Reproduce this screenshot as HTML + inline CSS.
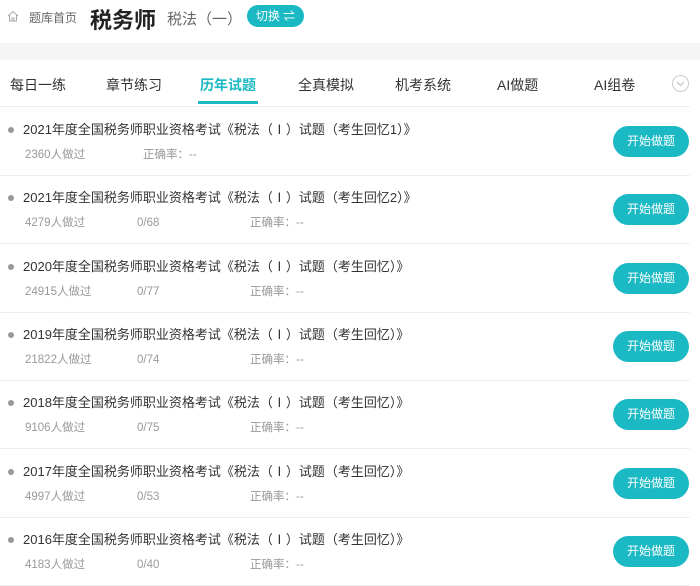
<!DOCTYPE html><html><head><meta charset="utf-8"><style>
*{margin:0;padding:0;box-sizing:border-box}
body{width:700px;height:578px;overflow:hidden;background:#fff;font-family:"Liberation Sans","Noto Sans CJK SC",sans-serif;position:relative}
.a{position:absolute;white-space:nowrap}
.tab{position:absolute;top:75px;font-size:14px;color:#333}
.row{position:absolute;left:0;width:690px;height:68px;border-bottom:1px solid #eee}
.dot{position:absolute;left:8px;top:19px;width:6px;height:6px;border-radius:50%;background:#999}
.t{position:absolute;left:23px;top:13px;font-size:13px;line-height:18px;color:#333;white-space:nowrap}
.s{position:absolute;top:39px;font-size:11.5px;line-height:16px;color:#999;white-space:nowrap}
.btn{position:absolute;left:613px;top:18px;width:76px;height:31px;border-radius:16px;background:#1bb9c3;color:#fff;font-size:12px;text-align:center;line-height:31px}
</style></head><body>
<svg class="a" style="left:7px;top:10px" width="12" height="12" viewBox="0 0 12 12"><path d="M1 6L6 1.5 11 6M2.5 5v6h7V5M5 11V8h2v3" fill="none" stroke="#aaa" stroke-width="1"/></svg>
<div class="a" style="left:29px;top:9px;font-size:12px;color:#666">题库首页</div>
<div class="a" style="left:90px;top:3px;font-size:22px;font-weight:bold;color:#222">税务师</div>
<div class="a" style="left:167px;top:8px;font-size:15px;color:#666">税法（一）</div>
<div class="a" style="left:247px;top:5px;width:57px;height:22px;border-radius:11px;background:#1bb9c3;color:#fff;font-size:12px;line-height:22px;text-align:center">切换 ⇌</div>
<div class="a" style="left:0;top:43px;width:700px;height:17px;background:#f5f5f5"></div>
<div class="tab" style="left:10px">每日一练</div>
<div class="tab" style="left:106px">章节练习</div>
<div class="tab" style="left:200px;color:#1bb9c3;font-weight:bold">历年试题</div>
<div class="a" style="left:198px;top:101px;width:60px;height:3px;background:#1bb9c3"></div>
<div class="tab" style="left:298px">全真模拟</div>
<div class="tab" style="left:395px">机考系统</div>
<div class="tab" style="left:497px">AI做题</div>
<div class="tab" style="left:594px">AI组卷</div>
<div class="a" style="left:672px;top:75px;width:17px;height:17px;border:1px solid #ccc;border-radius:50%"></div>
<svg class="a" style="left:676px;top:81px" width="9" height="6"><path d="M1 1l3.5 3.5L8 1" fill="none" stroke="#bbb"/></svg>
<div class="a" style="left:0;top:106px;width:690px;height:1px;background:#eee"></div>

<div class="row" style="top:108px"><div class="dot"></div><div class="t">2021年度全国税务师职业资格考试《税法（Ⅰ）试题（考生回忆1）》</div><div class="s" style="left:25px">2360人做过</div><div class="s" style="left:143px">正确率：--</div><div class="btn">开始做题</div></div>
<div class="row" style="top:176px"><div class="dot"></div><div class="t">2021年度全国税务师职业资格考试《税法（Ⅰ）试题（考生回忆2）》</div><div class="s" style="left:25px">4279人做过</div><div class="s" style="left:137px">0/68</div><div class="s" style="left:250px">正确率：--</div><div class="btn">开始做题</div></div>
<div class="row" style="top:245px"><div class="dot"></div><div class="t">2020年度全国税务师职业资格考试《税法（Ⅰ）试题（考生回忆）》</div><div class="s" style="left:25px">24915人做过</div><div class="s" style="left:137px">0/77</div><div class="s" style="left:250px">正确率：--</div><div class="btn">开始做题</div></div>
<div class="row" style="top:313px"><div class="dot"></div><div class="t">2019年度全国税务师职业资格考试《税法（Ⅰ）试题（考生回忆）》</div><div class="s" style="left:25px">21822人做过</div><div class="s" style="left:137px">0/74</div><div class="s" style="left:250px">正确率：--</div><div class="btn">开始做题</div></div>
<div class="row" style="top:381px"><div class="dot"></div><div class="t">2018年度全国税务师职业资格考试《税法（Ⅰ）试题（考生回忆）》</div><div class="s" style="left:25px">9106人做过</div><div class="s" style="left:137px">0/75</div><div class="s" style="left:250px">正确率：--</div><div class="btn">开始做题</div></div>
<div class="row" style="top:450px"><div class="dot"></div><div class="t">2017年度全国税务师职业资格考试《税法（Ⅰ）试题（考生回忆）》</div><div class="s" style="left:25px">4997人做过</div><div class="s" style="left:137px">0/53</div><div class="s" style="left:250px">正确率：--</div><div class="btn">开始做题</div></div>
<div class="row" style="top:518px"><div class="dot"></div><div class="t">2016年度全国税务师职业资格考试《税法（Ⅰ）试题（考生回忆）》</div><div class="s" style="left:25px">4183人做过</div><div class="s" style="left:137px">0/40</div><div class="s" style="left:250px">正确率：--</div><div class="btn">开始做题</div></div>
</body></html>
